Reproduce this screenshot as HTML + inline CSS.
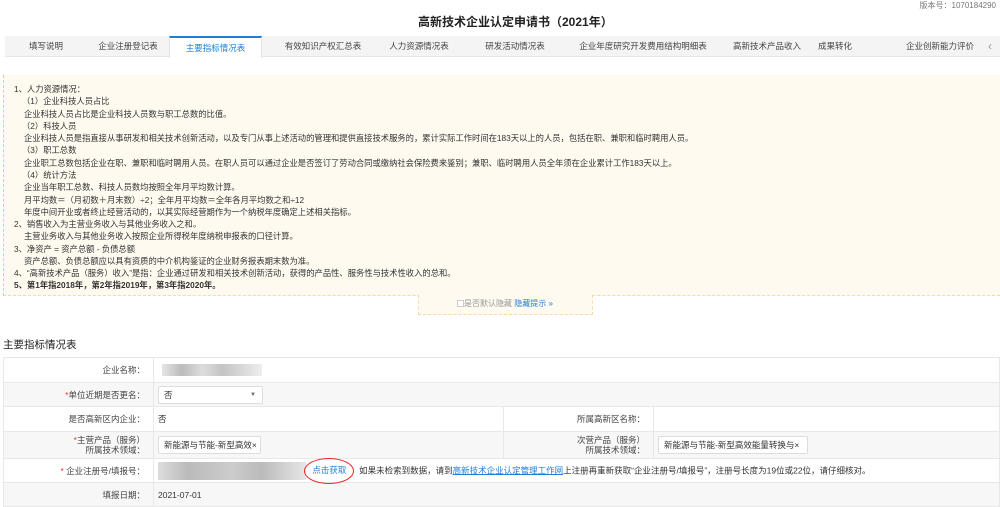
<!DOCTYPE html>
<html><head><meta charset="utf-8"><style>
*{margin:0;padding:0;box-sizing:border-box}
body{width:1000px;height:499px;overflow:hidden;background:#fff;font-family:"Liberation Sans","Noto Sans CJK SC",sans-serif;color:#333;position:relative;font-size:9px}
.abs{position:absolute;white-space:nowrap}
.tabs{position:absolute;left:5px;top:36px;width:995px;height:21px;background:#f4f4f4;border-bottom:1px solid #e6e6e6}
.tab{position:absolute;top:0;height:21px;line-height:21px;font-size:8.5px;color:#444;text-align:center}
.notice{position:absolute;left:3px;top:75px;width:997px;height:221px;background:#fffaf0;border-left:1px dashed #f5c77e;border-bottom:1px dashed #f5dba8}
.notice div{position:absolute;left:10px;font-size:8.3px;color:#333;white-space:nowrap}
.tog{position:absolute;left:418px;top:295px;width:175px;height:20px;background:#fffaf0;border:1px dashed #f5dba8;border-top:none;font-size:8px;color:#999;line-height:18px;padding-left:38px}
table{position:absolute;left:3px;top:357px;width:997px;border-collapse:collapse;font-size:8.5px;table-layout:fixed}
td{border:1px solid #e8e8e8;vertical-align:middle;overflow:visible}
td.l{text-align:right;padding-right:8px;color:#444}
td.l2{text-align:right;padding-right:8px;color:#444}
tr.g td{background:#f7f7f7}
.red{color:#e33}
.box{display:inline-block;border:1px solid #ddd;background:#fff;border-radius:2px;height:18px;line-height:16px;padding-left:5px;vertical-align:middle}
.blur{display:inline-block;background:linear-gradient(90deg,#e5e5e5,#bbb 20%,#ddd 40%,#c4c4c4 60%,#d8d8d8 80%,#eee);height:12px;vertical-align:middle}
</style></head><body>
<div class="abs" style="right:4px;top:0;font-size:8px;color:#777">版本号：1070184290</div>
<div class="abs" style="left:418px;top:13px;font-size:12px;font-weight:bold;color:#222">高新技术企业认定申请书（2021年）</div>
<div class="tabs">
<div class="tab" style="left:0;width:82px">填写说明</div>
<div class="tab" style="left:82px;width:82px">企业注册登记表</div>
<div class="tab" style="left:164px;width:93px;background:#fff;border-top:2px solid #1e7fd8;border-left:1px solid #e3e3e3;border-right:1px solid #e3e3e3;color:#1e7fd8;height:22px">主要指标情况表</div>
<div class="tab" style="left:262px;width:112px">有效知识产权汇总表</div>
<div class="tab" style="left:374px;width:80px">人力资源情况表</div>
<div class="tab" style="left:470px;width:80px">研发活动情况表</div>
<div class="tab" style="left:568px;width:140px">企业年度研究开发费用结构明细表</div>
<div class="tab" style="left:722px;width:80px">高新技术产品收入</div>
<div class="tab" style="left:800px;width:60px">成果转化</div>
<div class="tab" style="left:895px;width:80px">企业创新能力评价</div>
<div class="tab" style="left:978px;width:14px;font-size:12px;color:#999">‹</div>
</div>
<div class="notice">
<div style="top:8px">1、人力资源情况：</div>
<div style="top:20px;left:18px">（1）企业科技人员占比</div>
<div style="top:33px;left:20px">企业科技人员占比是企业科技人员数与职工总数的比值。</div>
<div style="top:45px;left:18px">（2）科技人员</div>
<div style="top:57px;left:20px">企业科技人员是指直接从事研发和相关技术创新活动，以及专门从事上述活动的管理和提供直接技术服务的，累计实际工作时间在183天以上的人员，包括在职、兼职和临时聘用人员。</div>
<div style="top:69px;left:18px">（3）职工总数</div>
<div style="top:82px;left:20px">企业职工总数包括企业在职、兼职和临时聘用人员。在职人员可以通过企业是否签订了劳动合同或缴纳社会保险费来鉴别；兼职、临时聘用人员全年须在企业累计工作183天以上。</div>
<div style="top:94px;left:18px">（4）统计方法</div>
<div style="top:106px;left:20px">企业当年职工总数、科技人员数均按照全年月平均数计算。</div>
<div style="top:119px;left:20px">月平均数＝（月初数＋月末数）÷2；全年月平均数＝全年各月平均数之和÷12</div>
<div style="top:131px;left:20px">年度中间开业或者终止经营活动的，以其实际经营期作为一个纳税年度确定上述相关指标。</div>
<div style="top:143px">2、销售收入为主营业务收入与其他业务收入之和。</div>
<div style="top:155px;left:20px">主营业务收入与其他业务收入按照企业所得税年度纳税申报表的口径计算。</div>
<div style="top:168px">3、净资产 = 资产总额 - 负债总额</div>
<div style="top:180px;left:20px">资产总额、负债总额应以具有资质的中介机构鉴证的企业财务报表期末数为准。</div>
<div style="top:192px">4、“高新技术产品（服务）收入”是指：企业通过研发和相关技术创新活动，获得的产品性、服务性与技术性收入的总和。</div>
<div style="top:204px;font-weight:bold">5、第1年指2018年，第2年指2019年，第3年指2020年。</div>
</div>
<div class="tog"><span style="display:inline-block;width:7px;height:7px;border:1px solid #ccc;background:#fff;vertical-align:middle"></span>是否默认隐藏 <span style="color:#1e7fd8">隐藏提示 »</span></div>
<div class="abs" style="left:3px;top:337px;font-size:10.5px;color:#222">主要指标情况表</div>
<table>
<colgroup><col style="width:150px"><col style="width:350px"><col style="width:150px"><col></colgroup>
<tr style="height:25px"><td class="l">企业名称：</td><td colspan="3" style="padding-left:8px"><span class="blur" style="width:100px"></span></td></tr>
<tr class="g" style="height:24px"><td class="l"><span class="red">*</span>单位近期是否更名：</td><td colspan="3" style="padding-left:4px"><span class="box" style="width:105px;position:relative">否<span style="position:absolute;right:6px;top:0;font-size:6px;color:#666">▼</span></span></td></tr>
<tr style="height:25px"><td class="l">是否高新区内企业：</td><td style="padding-left:4px">否</td><td class="l2">所属高新区名称：</td><td></td></tr>
<tr class="g" style="height:27px"><td class="l" style="line-height:10px"><span class="red">*</span>主营产品（服务）<br>所属技术领域：</td><td style="padding-left:4px"><span class="box" style="width:103px;overflow:hidden;white-space:nowrap">新能源与节能-新型高效×</span></td><td class="l2" style="line-height:10px">次营产品（服务）<br>所属技术领域：</td><td style="padding-left:4px"><span class="box" style="width:150px;overflow:hidden;white-space:nowrap">新能源与节能-新型高效能量转换与×</span></td></tr>
<tr style="height:24px"><td class="l"><span class="red">*</span> 企业注册号/填报号：</td><td colspan="3" style="padding-left:4px;white-space:nowrap;line-height:14px"><span class="blur" style="width:148px;height:18px;background:linear-gradient(90deg,#ddd,#bbb 20%,#ccc 50%,#bbb 70%,#e6e6e6)"></span> <span style="display:inline-block;width:50px;height:26px;margin:-6px 0 -6px -4px;border:1.5px solid #e22;border-radius:50%;text-align:center;line-height:23px;color:#1e7fd8;vertical-align:middle">点击获取</span> &nbsp;如果未检索到数据，请到<span style="color:#1e7fd8;text-decoration:underline">高新技术企业认定管理工作网</span>上注册再重新获取“企业注册号/填报号”，注册号长度为19位或22位，请仔细核对。</td></tr>
<tr class="g" style="height:24px"><td class="l">填报日期：</td><td colspan="3" style="padding-left:4px">2021-07-01</td></tr>
</table>
</body></html>
